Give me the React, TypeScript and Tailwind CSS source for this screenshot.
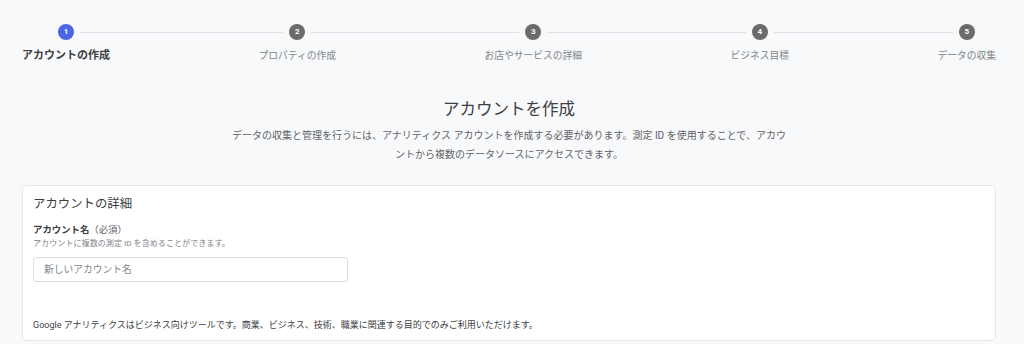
import { Fragment } from "react";

const steps = [
  "アカウントの作成",
  "プロパティの作成",
  "お店やサービスの詳細",
  "ビジネス目標",
  "データの収集",
];

const font = "font-['Roboto','Noto_Sans_CJK_JP',sans-serif]";

export default function App() {
  return (
    <div className={`min-h-[344px] w-[1024px] bg-[#f8f9fa] pl-[22px] pr-[28px] ${font}`}>
      {/* stepper */}
      <div className="flex items-start pt-[24px]">
        {steps.map((label, i) => {
          const active = i === 0;
          return (
            <Fragment key={label}>
              {i > 0 && (
                <div className="flex h-[16px] flex-1 items-center">
                  <div className="h-px w-full bg-[#dfe1e5]" />
                </div>
              )}
              <div className="flex flex-col items-center">
                <div className="flex h-[16px] w-full items-center gap-[6px]">
                  <div className={`h-px flex-1 ${i > 0 ? "bg-[#dfe1e5]" : ""}`} />
                  <div
                    className={`flex h-[16px] w-[16px] items-center justify-center rounded-full text-[8px] font-bold text-white ${
                      active ? "bg-[#4a65e6]" : "bg-[#6b6b6b]"
                    }`}
                  >
                    {i + 1}
                  </div>
                  <div className={`h-px flex-1 ${i < steps.length - 1 ? "bg-[#dfe1e5]" : ""}`} />
                </div>
                <div
                  className={`mt-[9px] whitespace-nowrap leading-[14px] ${
                    active
                      ? "text-[11px] font-bold text-[#3c4043]"
                      : "text-[9.75px] text-[#80868b]"
                  }`}
                >
                  {label}
                </div>
              </div>
            </Fragment>
          );
        })}
      </div>

      {/* heading */}
      <div className="mt-[35px] flex flex-col items-center">
        <h1 className="text-[16.5px] leading-[24px] text-[#3c4043]">アカウントを作成</h1>
        <p className="mt-[3.5px] w-[600px] text-center text-[10px] leading-[19.5px] text-[#5f6368]">
          データの収集と管理を行うには、アナリティクス アカウントを作成する必要があります。測定 ID を使用することで、アカウ
          <br />
          ントから複数のデータソースにアクセスできます。
        </p>
      </div>

      {/* card */}
      <div className="mt-[20px] rounded-[5px] border border-[#e6e8eb] bg-white pl-[10px] pt-[10px] pb-[8px]">
        <h2 className="text-[12.4px] leading-[16px] text-[#3c4043]">アカウントの詳細</h2>
        <div className="mt-[11.5px] text-[9.4px] font-bold leading-[13px] text-[#3c4043]">
          アカウント名<span className="font-normal text-[#5f6368]">（必須）</span>
        </div>
        <div className="mt-[2px] text-[8.1px] leading-[11px] text-[#80868b]">
          アカウントに複数の測定 ID を含めることができます。
        </div>
        <input
          className="mt-[7.5px] block h-[25px] w-[315px] rounded-[3px] border border-[#dadce0] pl-[10px] text-[9.75px] text-[#3c4043] outline-none placeholder:text-[#80868b]"
          placeholder="新しいアカウント名"
        />
        <p className="mt-[37.5px] text-[9px] leading-[13px] text-[#3c4043]">
          Google アナリティクスはビジネス向けツールです。商業、ビジネス、技術、職業に関連する目的でのみご利用いただけます。
        </p>
      </div>
    </div>
  );
}
